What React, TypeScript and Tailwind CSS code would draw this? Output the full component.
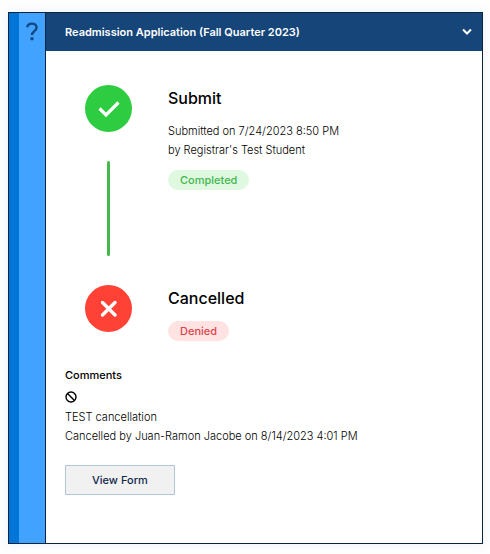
import type { ReactNode } from 'react';

type StepProps = {
  title: string;
  icon: ReactNode;
  color: string;
  badge: string;
  badgeStyle: string;
  connector?: boolean;
  children?: ReactNode;
};

function Step({ title, icon, color, badge, badgeStyle, connector, children }: StepProps) {
  return (
    <li className="flex gap-9">
      <div className="flex w-[47px] shrink-0 flex-col items-center">
        <span className={`flex size-[47px] items-center justify-center rounded-full ${color}`}>{icon}</span>
        {connector && <span className="mt-[29px] mb-[29px] h-[95px] w-[3px] rounded-full bg-[#43b94c]" />}
      </div>
      <div className="min-w-0">
        <h2 className="text-[16px] leading-[26px] font-medium">{title}</h2>
        {children && <p className="mt-[11px] text-[11px] leading-[19px] font-light">{children}</p>}
        <span
          className={`mt-[10px] block h-5 w-fit rounded-full px-3 text-[11px] leading-5 font-medium ${badgeStyle}`}
        >
          {badge}
        </span>
      </div>
    </li>
  );
}

export default function App() {
  return (
    <div className="bg-[#fefefe] px-2 pt-3 pb-[10px] font-['Inter','Liberation_Sans',sans-serif] text-black">
      <section className="mr-[-1px] flex border border-[#0b2440] bg-white shadow-[0_0_10px_rgba(70,120,190,0.10)]">
        <aside className="flex w-9 shrink-0 justify-center border-l-[10px] border-[#0275d8] bg-[#42a2ff] pt-[9px]">
          <svg className="h-[19px] w-[14px]" viewBox="0 0 14 19" fill="none" aria-label="Help">
            <path
              d="M2.2 5.4C2.5 3 4.4 1.6 6.9 1.6c2.8 0 4.7 1.5 4.7 3.8 0 2-1 2.9-2.5 4-1.6 1.1-2.1 1.9-2.1 3.6"
              stroke="#114880"
              strokeWidth="2.4"
            />
            <circle cx="7" cy="16.8" r="1.7" fill="#114880" />
          </svg>
        </aside>
        <div className="min-w-0 flex-1 border-l border-[#0b2440]">
          <header className="flex h-[38px] items-center justify-between bg-[#164579] pr-[10px] pl-[19px] text-white">
            <h1 className="text-[11px] leading-5 font-semibold">Readmission Application (Fall Quarter 2023)</h1>
            <button type="button" aria-label="Collapse">
              <svg className="h-[10px] w-[10px]" viewBox="0 0 10 10" fill="none">
                <path d="M1 2.5l4 4 4-4" stroke="white" strokeWidth="2" />
              </svg>
            </button>
          </header>
          <div className="px-[19px] pt-[34px] pb-12">
            <ol className="pl-5">
              <Step
                title="Submit"
                color="bg-[#2ecc40]"
                badge="Completed"
                badgeStyle="bg-[#dff9e1] text-[#43b64e]"
                connector
                icon={
                  <svg className="size-6" viewBox="0 0 24 24" fill="none">
                    <path d="M2.5 11.5l6.5 6.5L21.5 5.5" stroke="white" strokeWidth="3.2" />
                  </svg>
                }
              >
                Submitted on 7/24/2023 8:50 PM
                <br />
                by Registrar's Test Student
              </Step>
              <Step
                title="Cancelled"
                color="bg-[#ff4136]"
                badge="Denied"
                badgeStyle="bg-[#ffe3e3] text-[#e0434b]"
                icon={
                  <svg className="size-6" viewBox="0 0 24 24" fill="none">
                    <path d="M5.5 5.5l12.5 12.5M18 5.5L5.5 18" stroke="white" strokeWidth="3.4" strokeLinecap="round" />
                  </svg>
                }
              />
            </ol>
            <div className="mt-[25px] text-[11px] leading-[19px] font-light">
              <h3 className="font-medium">Comments</h3>
              <svg className="mt-[6px] mb-[5px] size-3" viewBox="0 0 12 12" fill="none" aria-label="Cancelled">
                <circle cx="6" cy="6" r="5" stroke="black" strokeWidth="1.4" />
                <path d="M2.5 2.5l7 7" stroke="black" strokeWidth="1.4" />
              </svg>
              <p>TEST cancellation</p>
              <p>Cancelled by Juan-Ramon Jacobe on 8/14/2023 4:01 PM</p>
            </div>
            <button
              type="button"
              className="mt-[19px] h-[30px] border border-[#a9c8dc] bg-[#f1f1f2] px-[26px] text-[11px] leading-5 font-medium text-[#10294a]"
            >
              View Form
            </button>
          </div>
        </div>
      </section>
    </div>
  );
}
